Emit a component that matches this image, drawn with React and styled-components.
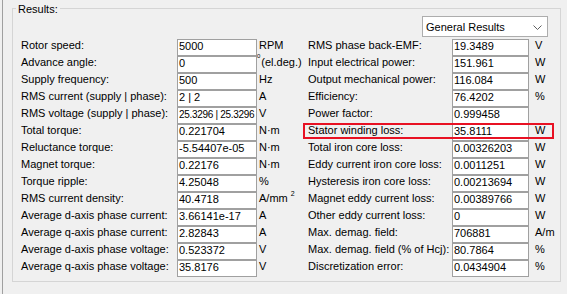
import React from 'react'
import styled, { createGlobalStyle } from 'styled-components'

const GlobalStyle = createGlobalStyle`
  html, body {
    margin: 0;
    padding: 0;
    background: #f0f0f0;
  }
  body {
    font-family: "Liberation Sans", Arial, sans-serif;
    font-size: 11px;
    color: #000;
  }
`

const Page = styled.div`
  width: 565px;
  height: 294px;
  box-sizing: border-box;
  margin-left: 2px;
  border-left: 1px solid #a0a0a0;
  overflow: hidden;
`

const Group = styled.fieldset`
  margin: 1px 0 0 9px;
  padding: 0;
  width: 549px;
  height: 281px;
  box-sizing: border-box;
  border: 1px solid #d5d5d5;
  min-width: 0;
`

const Legend = styled.legend`
  margin-left: 3px;
  padding: 2px 2px 0 2px;
  line-height: 13px;
`

const Toolbar = styled.div`
  display: flex;
  justify-content: flex-end;
  padding-right: 12px;
  margin-bottom: 2px;
`

const Select = styled.div`
  width: 126px;
  height: 21px;
  box-sizing: border-box;
  border: 1px solid #adadad;
  background: #fff;
  display: flex;
  align-items: center;
  justify-content: space-between;
  padding: 1px 5px 0 3px;
  line-height: 13px;
`

const Columns = styled.div`
  display: flex;
  padding-left: 8px;
`

const Column = styled.div`
  width: ${p => p.$width};
  flex: ${p => (p.$width ? 'none' : '1')};
  display: flex;
  flex-direction: column;
`

const Row = styled.div`
  position: relative;
  display: grid;
  grid-template-columns: ${p => p.$cols};
  height: 17px;

  ${p => p.$highlight && `
    &::after {
      content: '';
      position: absolute;
      left: -5px;
      right: 6px;
      top: -1px;
      height: 16px;
      box-sizing: border-box;
      border: 2px solid #e81123;
      pointer-events: none;
    }
  `}
`

const Label = styled.div`
  line-height: 13px;
  white-space: nowrap;
`

const Box = styled.div`
  height: 17px;
  box-sizing: border-box;
  border: 1px solid #a0a0a0;
  background: #fff;
  padding: 0 1px;
  line-height: 13px;
  font-size: ${p => (p.$small ? '10px' : '11px')};
  letter-spacing: ${p => (p.$small ? '-0.3px' : 'normal')};
  white-space: nowrap;
  overflow: hidden;
`

const Unit = styled.div`
  line-height: 13px;
  padding-left: ${p => p.$pad};
  white-space: nowrap;
`

const Sup = styled.span`
  display: inline-block;
  vertical-align: top;
  position: relative;
  font-size: ${p => p.$size};
  line-height: 6px;
  top: ${p => p.$top};
  margin-left: ${p => p.$ml};
  margin-right: 1px;
`

const Chevron = () => (
  <svg width="9" height="5" viewBox="0 0 9 5">
    <path d="M0.5 0.5 L4.5 4.5 L8.5 0.5" fill="none" stroke="#606060" strokeWidth="1" />
  </svg>
)

const leftRows = [
  ['Rotor speed:', '5000', 'RPM'],
  ['Advance angle:', '0', <><Sup $size="6px" $top="-3px" $ml="-2px">0</Sup>(el.deg.)</>],
  ['Supply frequency:', '500', 'Hz'],
  ['RMS current (supply | phase):', '2 | 2', 'A'],
  ['RMS voltage (supply | phase):', '25.3296 | 25.3296', 'V', true],
  ['Total torque:', '0.221704', 'N·m'],
  ['Reluctance torque:', '-5.54407e-05', 'N·m'],
  ['Magnet torque:', '0.22176', 'N·m'],
  ['Torque ripple:', '4.25048', '%'],
  ['RMS current density:', '40.4718', <>A/mm<Sup $size="7px" $top="-1px" $ml="3px">2</Sup></>],
  ['Average d-axis phase current:', '3.66141e-17', 'A'],
  ['Average q-axis phase current:', '2.82843', 'A'],
  ['Average d-axis phase voltage:', '0.523372', 'V'],
  ['Average q-axis phase voltage:', '35.8176', 'V'],
]

const rightRows = [
  ['RMS phase back-EMF:', '19.3489', 'V'],
  ['Input electrical power:', '151.961', 'W'],
  ['Output mechanical power:', '116.084', 'W'],
  ['Efficiency:', '76.4202', '%'],
  ['Power factor:', '0.999458', ''],
  ['Stator winding loss:', '35.8111', 'W'],
  ['Total iron core loss:', '0.00326203', 'W'],
  ['Eddy current iron core loss:', '0.0011251', 'W'],
  ['Hysteresis iron core loss:', '0.00213694', 'W'],
  ['Magnet eddy current loss:', '0.00389766', 'W'],
  ['Other eddy current loss:', '0', 'W'],
  ['Max. demag. field:', '706881', 'A/m'],
  ['Max. demag. field (% of Hcj):', '80.7864', '%'],
  ['Discretization error:', '0.0434904', '%'],
]

function App() {
  return (
    <>
      <GlobalStyle />
      <Page>
        <Group>
          <Legend>Results:</Legend>
          <Toolbar>
            <Select>
              <span>General Results</span>
              <Chevron />
            </Select>
          </Toolbar>
          <Columns>
            <Column $width="287px">
              {leftRows.map(([label, value, unit, small]) => (
                <Row key={label} $cols="156px 80px 1fr">
                  <Label>{label}</Label>
                  <Box $small={small}>{value}</Box>
                  <Unit $pad="2px">{unit}</Unit>
                </Row>
              ))}
            </Column>
            <Column>
              {rightRows.map(([label, value, unit]) => (
                <Row key={label} $cols="144px 77px 1fr" $highlight={label === 'Stator winding loss:'}>
                  <Label>{label}</Label>
                  <Box>{value}</Box>
                  <Unit $pad="6px">{unit}</Unit>
                </Row>
              ))}
            </Column>
          </Columns>
        </Group>
      </Page>
    </>
  )
}

export default App
